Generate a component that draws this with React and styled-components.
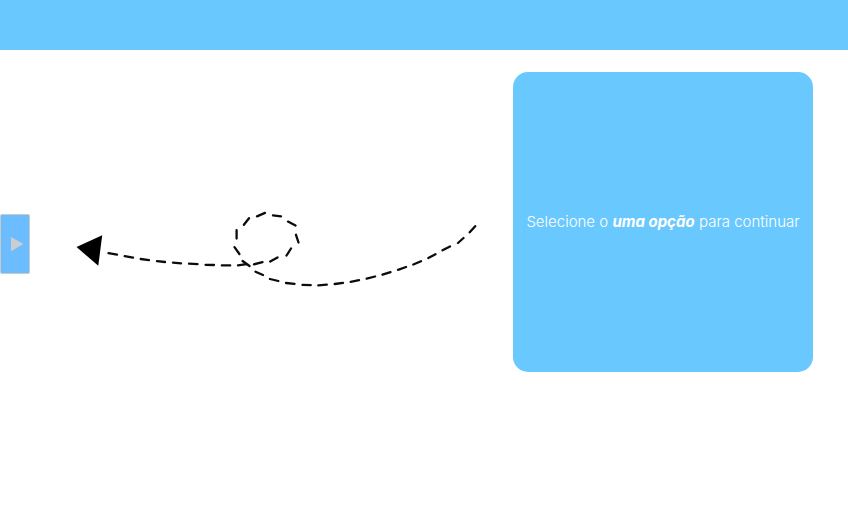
import React from 'react';
import styled, { createGlobalStyle } from 'styled-components';

const GlobalStyle = createGlobalStyle`
  *, *::before, *::after { box-sizing: border-box; }
  body {
    margin: 0;
    background: #ffffff;
    font-family: Inter, "Liberation Sans", sans-serif;
  }
`;

const TopBar = styled.header`
  height: 50px;
  background: #69c9ff;
`;

const Content = styled.main`
  display: flex;
  align-items: flex-start;
  padding: 22px 35px 22px 0;
`;

const MenuToggle = styled.button`
  display: flex;
  align-items: center;
  justify-content: center;
  flex: none;
  width: 30px;
  height: 60px;
  margin: 142px 0 0;
  padding: 0 0 0 3px;
  border: 1px solid #c9c9c9;
  border-radius: 2px;
  background: #6bbdff;
  cursor: pointer;
`;

const PlayIcon = styled.svg`
  display: block;
  width: 14px;
  height: 16px;
`;

const Pointer = styled.div`
  flex: 1;
  display: flex;
  justify-content: flex-end;
  padding: 128px 33px 0 40px;
`;

const ArrowDrawing = styled.svg`
  display: block;
  width: 410px;
  height: 100px;
  max-width: 100%;
`;

const Card = styled.section`
  display: flex;
  align-items: center;
  justify-content: center;
  flex: none;
  width: 300px;
  height: 300px;
  border-radius: 15px;
  background: #69c9ff;
`;

const Message = styled.p`
  margin: 0;
  color: #ffffff;
  font-size: 15px;
  font-weight: 300;
  line-height: 20px;
  text-align: center;
  white-space: nowrap;
`;

const Emphasis = styled.em`
  font-style: italic;
  font-weight: 700;
`;

const dashes = [
  'M108.5 253.1L117 254.6', 'M124.7 256.2L133 257.6', 'M140.7 259L149 260.1',
  'M157 261.1L165 262', 'M173 262.7L181 263.3', 'M189 263.7L197.5 264.2',
  'M205.5 264.8L214 265', 'M221.8 265.4L230.2 265.4', 'M238 265.4L246.5 264.2',
  'M254 264.3L262.5 262.2', 'M270.2 261.5L277.5 257.4', 'M286.5 255.5L291 248.5',
  'M298.5 242.5L296 234.8', 'M295.5 225.5L288 221.6', 'M281 216.3L273 215.4',
  'M265 212.9L257 216.4', 'M249 218.2L243.9 224.8', 'M236.6 230.2L236.6 238.6',
  'M234.5 247.2L239.4 254', 'M242.6 261L249.5 266', 'M255.5 271.7L263 275',
  'M270 279L278.3 281', 'M286 283L294.5 283.8', 'M302.5 284.9L310.7 285.1',
  'M318.3 285.3L326.8 284.6', 'M334.7 284L343 282.8', 'M350.7 281.8L359 280.2',
  'M366.7 278.7L375 276.5', 'M382.5 274.7L390.5 272.1', 'M398 269.8L406 267',
  'M413.3 264.5L421 261.2', 'M428.3 258L435.5 254.2', 'M442.5 250.3L450 246.4',
  'M458 243L463.5 238', 'M469.7 232.3L475.2 226.2',
];

export default function App() {
  return (
    <>
      <GlobalStyle />
      <TopBar />
      <Content>
        <MenuToggle type="button" aria-label="Abrir menu">
          <PlayIcon viewBox="0 0 14 16" aria-hidden="true">
            <path d="M1 1L13.4 8L1 15.2Z" fill="#cdcdcf" />
          </PlayIcon>
        </MenuToggle>
        <Pointer>
          <ArrowDrawing viewBox="70 200 410 100" aria-hidden="true">
            <path d="M76.5 247L102.2 235.3L98.3 265.8Z" fill="#000000" />
            <path
              d={dashes.join('')}
              fill="none"
              stroke="#0c0c0c"
              strokeWidth="2.3"
              strokeLinecap="round"
            />
          </ArrowDrawing>
        </Pointer>
        <Card>
          <Message>
            Selecione o <Emphasis>uma opção</Emphasis> para continuar
          </Message>
        </Card>
      </Content>
    </>
  );
}
